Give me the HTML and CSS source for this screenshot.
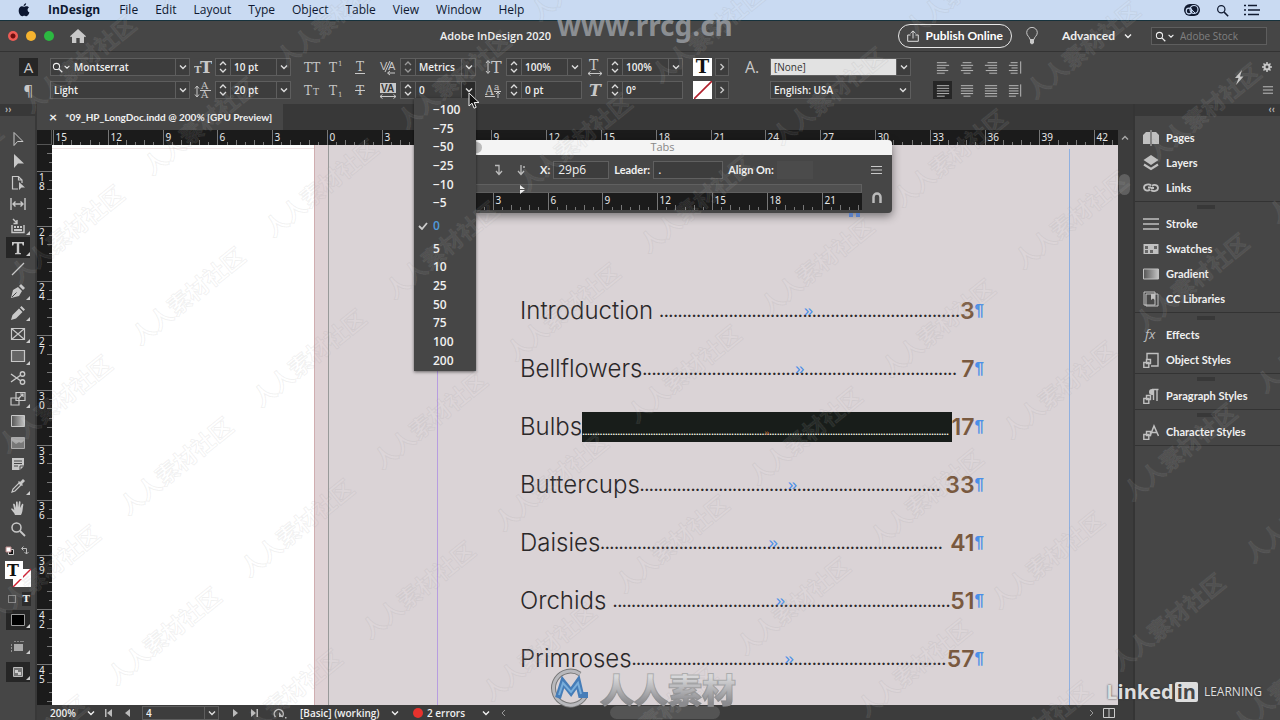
FILE: index.html
```html
<!DOCTYPE html>
<html lang="en">
<head>
<meta charset="utf-8">
<title>Adobe InDesign 2020</title>
<link rel="stylesheet" href="styles.css">
</head>
<body>
<svg class="sprite" aria-hidden="true">
  <defs>
    <linearGradient id="fade"><stop offset="0" stop-color="#555"/><stop offset="1" stop-color="#c4c4c4"/></linearGradient>
    <linearGradient id="silver" x1="0" y1="0" x2="0" y2="1"><stop offset="0" stop-color="#d4d4d6"/><stop offset="1" stop-color="#88888c"/></linearGradient>
  </defs>
  <symbol id="down" viewBox="0 0 10 10"><path d="M2 3.5l3 3 3-3" fill="none" stroke="currentColor" stroke-width="1.4"/></symbol>
  <symbol id="right" viewBox="0 0 10 10"><path d="M3.5 2l3 3-3 3" fill="none" stroke="currentColor" stroke-width="1.4"/></symbol>
  <symbol id="spin" viewBox="0 0 14 18"><path d="M4 7l3-3 3 3M4 11l3 3 3-3" fill="none" stroke="currentColor" stroke-width="1.3"/></symbol>
  <symbol id="search" viewBox="0 0 16 16"><circle cx="6.5" cy="6.5" r="4.5" fill="none" stroke="currentColor" stroke-width="1.5"/><path d="M10 10l5 5" stroke="currentColor" stroke-width="1.8"/></symbol>
  <symbol id="menu" viewBox="0 0 12 12"><path d="M1 2.5h11M1 6h11M1 9.500h11" stroke="currentColor"/></symbol>
  <symbol id="al" viewBox="0 0 16 16"><path d="M1 2.500h11M1 5.500h14M1 8.500h10M1 11.500h13M1 14.500h9" stroke="currentColor"/></symbol>
  <symbol id="ac" viewBox="0 0 16 16"><path d="M3 2.500h10M1 5.500h14M3 8.500h10M1 11.500h14M4 14.500h8" stroke="currentColor"/></symbol>
  <symbol id="ar" viewBox="0 0 16 16"><path d="M4 2.500h11M1 5.500h14M5 8.500h10M2 11.500h13M6 14.500h9" stroke="currentColor"/></symbol>
  <symbol id="as" viewBox="0 0 16 16"><path d="M3 2.500h8M1 5.500h10M4 8.500h7M1 11.500h10M3 14.500h8M14.500 1v14" stroke="currentColor"/></symbol>
  <symbol id="jl" viewBox="0 0 16 16"><path d="M1 2.500h14M1 5.500h14M1 8.500h14M1 11.500h14M1 14.500h9" stroke="currentColor"/></symbol>
  <symbol id="jc" viewBox="0 0 16 16"><path d="M1 2.500h14M1 5.500h14M1 8.500h14M1 11.500h14M4 14.500h8" stroke="currentColor"/></symbol>
  <symbol id="jf" viewBox="0 0 16 16"><path d="M1 2.500h14M1 5.500h14M1 8.500h14M1 11.500h14M1 14.500h14" stroke="currentColor"/></symbol>
  <symbol id="js" viewBox="0 0 16 16"><path d="M1 2.500h11M1 5.500h11M1 8.500h11M1 11.500h11M1 14.500h8M14.500 1v14" stroke="currentColor"/></symbol>
  <symbol id="stylebox" viewBox="0 0 16 16"><path d="M3.500 7.500h4v4h-4zM.8 10.500h5v5h-5z" fill="#484848" stroke="currentColor" stroke-width="1.400"/></symbol>
</svg>

<header class="menubar">
  <svg class="apple" viewBox="0 0 14 16" aria-label="Apple"><path d="M9.500 0c.1 1.800-1.300 3.300-2.900 3.300C6.400 1.600 7.900.2 9.500 0zM7 4.300c.8 0 1.700-.7 3-.7 1.100 0 2.200.6 2.800 1.600-2.400 1.400-2 4.700.5 5.700-.6 1.700-2 4.300-3.500 4.300-.9 0-1.400-.6-2.500-.6s-1.700.6-2.500.6C3.100 15.200.8 12 .8 8.800.8 5.600 2.700 3.700 4.600 3.700c1 0 1.700.6 2.400.6z" fill="#0b1630"/></svg>
  <nav><a href="#" class="app">InDesign</a><a href="#">File</a><a href="#">Edit</a><a href="#">Layout</a><a href="#">Type</a><a href="#">Object</a><a href="#">Table</a><a href="#">View</a><a href="#">Window</a><a href="#">Help</a></nav>
  <div class="tray">
    <svg width="18" height="14" viewBox="0 0 18 14"><rect x="1" y="1" width="16" height="12" rx="6" fill="#101a30"/><circle cx="6" cy="8" r="2.800" fill="none" stroke="#c8d9f2" stroke-width="1.200"/><circle cx="11" cy="6.500" r="4" fill="none" stroke="#c8d9f2" stroke-width="1.200"/><path d="M7 5l5 5" stroke="#c8d9f2"/></svg>
    <svg width="13" height="13"><use href="#search"/></svg>
    <svg width="16" height="12" viewBox="0 0 16 12"><path d="M0 1.500h2M4 1.500h9M0 6h2M4 6h12M0 10.500h2M4 10.500h11" stroke="#101a30" stroke-width="1.700"/></svg>
  </div>
</header>

<div class="titlebar">
  <div class="lights"><i class="red"></i><i class="amber"></i><i class="green"></i></div>
  <button class="bare" aria-label="Home"><svg width="16" height="14" viewBox="0 0 16 14"><path d="M8 0l8 7.300-1 1L14 7.500V14h-4.300V9H6.300v5H2V7.500l-1 .8-1-1z" fill="#c8c8c8"/></svg></button>
  <h1>Adobe InDesign 2020</h1>
  <div class="title-tools">
    <button class="publish"><svg width="12" height="12" viewBox="0 0 12 12"><path d="M3.500 5H.7v6.300h10.600V5H8.500M6 8.500V1M3.500 3.300L6 .9l2.500 2.400" fill="none" stroke="#ddd"/></svg>Publish Online</button>
    <button class="bare" aria-label="Learn"><svg width="12" height="18" viewBox="0 0 12 18"><path d="M4 12.500C4 10 .7 9 .7 5.700a5.300 5.300 0 0 1 10.600 0C11.300 9 8 10 8 12.500z" fill="none" stroke="#c8c8c8"/><path d="M4 12.500h4V16l-2 1.500L4 16z" fill="#c8c8c8"/></svg></button>
    <button class="bare workspace">Advanced<svg width="10" height="10"><use href="#down"/></svg></button>
    <label class="stock"><svg width="11" height="11"><use href="#search"/></svg><svg width="8" height="8"><use href="#down"/></svg><input type="text" placeholder="Adobe Stock" aria-label="Adobe Stock"></label>
  </div>
</div>

<section class="control" aria-label="Character formatting">
  <div class="pair modes"><button class="on" aria-label="Character">A</button><button aria-label="Paragraph">¶</button></div>
  <div class="pair font">
    <div class="field"><svg class="lead" width="11" height="11"><use href="#search"/></svg><svg width="8" height="8"><use href="#down"/></svg><input value="Montserrat" aria-label="Font"><button aria-label="Fonts"><svg width="10" height="10"><use href="#down"/></svg></button></div>
    <div class="field"><select aria-label="Font style"><option>Light</option></select><span class="arrow"><svg width="10" height="10"><use href="#down"/></svg></span></div>
  </div>
  <div class="pair glyphs">
    <svg viewBox="0 0 18 18" class="serif"><text x="0" y="15" font-size="10">T</text><text x="6" y="15" font-size="17">T</text></svg>
    <svg viewBox="0 0 18 18" class="serif thin"><text x="7" y="8" font-size="10">A</text><text x="7" y="17" font-size="10">A</text><path d="M6 9.500h11M3 6v9M1 7.500L3 5l2 2.500M1 13.500L3 16l2-2.500"/></svg>
  </div>
  <div class="pair size">
    <div class="field"><button class="spin" aria-label="Step font size"><svg width="14" height="18"><use href="#spin"/></svg></button><input value="10 pt" aria-label="Font size"><button aria-label="Font sizes"><svg width="10" height="10"><use href="#down"/></svg></button></div>
    <div class="field"><button class="spin" aria-label="Step leading"><svg width="14" height="18"><use href="#spin"/></svg></button><input value="20 pt" aria-label="Leading"><button aria-label="Leadings"><svg width="10" height="10"><use href="#down"/></svg></button></div>
  </div>
  <div class="cases">
    <button aria-label="All caps"><svg viewBox="0 0 18 18" class="serif thin"><text x="1" y="14" font-size="12">TT</text></svg></button>
    <button aria-label="Superscript"><svg viewBox="0 0 18 18" class="serif thin"><text x="2" y="14" font-size="12">T</text><text x="11" y="8" font-size="7">1</text></svg></button>
    <button aria-label="Underline"><svg viewBox="0 0 18 18" class="serif thin"><text x="5" y="13" font-size="12">T</text><path d="M4 15.500h10"/></svg></button>
    <button aria-label="Small caps"><svg viewBox="0 0 18 18" class="serif thin"><text x="1" y="14" font-size="12">T</text><text x="10" y="14" font-size="9">T</text></svg></button>
    <button aria-label="Subscript"><svg viewBox="0 0 18 18" class="serif thin"><text x="2" y="14" font-size="12">T</text><text x="11" y="16" font-size="7">1</text></svg></button>
    <button aria-label="Strikethrough"><svg viewBox="0 0 18 18" class="serif thin"><text x="5" y="14" font-size="12">T</text><path d="M4 9.500h10"/></svg></button>
  </div>
  <div class="pair glyphs">
    <svg viewBox="0 0 18 18" class="sans"><text x="1" y="12" font-size="11">V</text><text x="9" y="12" font-size="11">A</text><path d="M11 3L6 14M16 15H9M11 13l-2.500 2 2.500 2"/></svg>
    <svg viewBox="0 0 18 18" class="sans"><rect x="1" y="2" width="16" height="10" fill="#c8c8c8"/><text x="2" y="11" font-size="10" class="dark">VA</text><path d="M1 15.500h16M3.500 13.500l-2.500 2 2.500 2M14.500 13.500l2.500 2-2.500 2"/></svg>
  </div>
  <div class="pair kern">
    <div class="field"><button class="spin dim" aria-label="Step kerning"><svg width="14" height="18"><use href="#spin"/></svg></button><select aria-label="Kerning"><option>Metrics</option></select><span class="arrow"><svg width="10" height="10"><use href="#down"/></svg></span></div>
    <div class="field">
      <button class="spin" aria-label="Step tracking"><svg width="14" height="18"><use href="#spin"/></svg></button><input value="0" aria-label="Tracking"><button class="open" aria-label="Tracking values" aria-expanded="true"><svg width="10" height="10"><use href="#down"/></svg></button>
      <div class="dropdown" role="menu">
        <button role="menuitem">−100</button><button role="menuitem">−75</button><button role="menuitem">−50</button><button role="menuitem">−25</button><button role="menuitem">−10</button><button role="menuitem">−5</button>
        <button role="menuitem" class="current"><svg width="10" height="8" viewBox="0 0 10 8"><path d="M1 4l3 3 5-6" fill="none" stroke="#ccc" stroke-width="1.800"/></svg>0</button>
        <button role="menuitem">5</button><button role="menuitem">10</button><button role="menuitem">25</button><button role="menuitem">50</button><button role="menuitem">75</button><button role="menuitem">100</button><button role="menuitem">200</button>
      </div>
      <svg class="cursor" width="12" height="18" viewBox="0 0 12 18"><path d="M1 1v13l3-2.800 2 5 2.200-.9-2-4.800H11z" fill="#111" stroke="#eee"/></svg>
    </div>
  </div>
  <div class="pair glyphs wide">
    <svg viewBox="0 0 18 18" class="serif thin"><text x="6" y="15" font-size="16">T</text><path d="M3 3v12M1 5l2-2.500L5 5M1 13l2 2.500L5 13"/></svg>
    <svg viewBox="0 0 18 18" class="serif thin"><text x="0" y="14" font-size="12">A</text><text x="9" y="9" font-size="9">a</text><path d="M0 15.500h10M9 10.500h7M13 17v-6M11 13l2-2 2 2"/></svg>
  </div>
  <div class="pair scale">
    <div class="field"><button class="spin" aria-label="Step vertical scale"><svg width="14" height="18"><use href="#spin"/></svg></button><input value="100%" aria-label="Vertical scale"><button aria-label="Vertical scales"><svg width="10" height="10"><use href="#down"/></svg></button></div>
    <div class="field"><button class="spin" aria-label="Step baseline shift"><svg width="14" height="18"><use href="#spin"/></svg></button><input value="0 pt" aria-label="Baseline shift"></div>
  </div>
  <div class="pair glyphs">
    <svg viewBox="0 0 18 18" class="serif thin"><text x="3" y="12" font-size="14">T</text><path d="M2 15.500h14M4.500 13.500l-2.500 2 2.500 2M13.500 13.500l2.500 2-2.500 2"/></svg>
    <svg viewBox="0 0 18 18" class="serif italic"><text x="3" y="15" font-size="16">T</text></svg>
  </div>
  <div class="pair scale">
    <div class="field"><button class="spin" aria-label="Step horizontal scale"><svg width="14" height="18"><use href="#spin"/></svg></button><input value="100%" aria-label="Horizontal scale"><button aria-label="Horizontal scales"><svg width="10" height="10"><use href="#down"/></svg></button></div>
    <div class="field"><button class="spin" aria-label="Step skew"><svg width="14" height="18"><use href="#spin"/></svg></button><input value="0°" aria-label="Skew"></div>
  </div>
  <div class="swatches">
    <button class="white" aria-label="Fill">T</button><button class="more" aria-label="Fill options"><svg width="10" height="10"><use href="#right"/></svg></button>
    <button class="white" aria-label="Stroke"><svg width="18" height="18"><path d="M0 18L18 0" stroke="#b0202c" stroke-width="1.600"/></svg></button><button class="more" aria-label="Stroke options"><svg width="10" height="10"><use href="#right"/></svg></button>
  </div>
  <div class="pair charstyle"><span>A.</span></div>
  <div class="pair language">
    <div class="field light"><select aria-label="Character style"><option>[None]</option></select><span class="arrow"><svg width="10" height="10"><use href="#down"/></svg></span></div>
    <div class="field"><select aria-label="Language"><option>English: USA</option></select><span class="arrow plain"><svg width="10" height="10"><use href="#down"/></svg></span></div>
  </div>
  <div class="aligns">
    <button aria-label="Align left"><svg><use href="#al"/></svg></button><button aria-label="Align center"><svg><use href="#ac"/></svg></button><button aria-label="Align right"><svg><use href="#ar"/></svg></button><button aria-label="Align towards spine"><svg><use href="#as"/></svg></button>
    <button class="on" aria-label="Justify left"><svg><use href="#jl"/></svg></button><button aria-label="Justify center"><svg><use href="#jc"/></svg></button><button aria-label="Justify all"><svg><use href="#jf"/></svg></button><button aria-label="Align away from spine"><svg><use href="#js"/></svg></button>
  </div>
  <button class="bare bolt" aria-label="Quick apply"><svg width="10" height="15" viewBox="0 0 10 15"><path d="M8 0L1 8h3.500L2 15l7.500-8.500H6z" fill="#c8c8c8"/></svg></button>
  <div class="pair corner">
    <button class="bare" aria-label="Settings"><svg width="10" height="10" viewBox="0 0 12 12"><circle cx="6" cy="6" r="3" fill="none" stroke="currentColor" stroke-width="2.500"/><path d="M6 0v2.500M6 9.500V12M0 6h2.500M9.500 6H12M1.800 1.800l1.700 1.700M8.500 8.500l1.700 1.700M10.200 1.800L8.500 3.500M3.500 8.500l-1.700 1.700" stroke="currentColor" stroke-width="1.800"/></svg></button>
    <button class="bare" aria-label="Panel menu"><svg width="11" height="12"><use href="#menu"/></svg></button>
  </div>
</section>

<main class="work">
  <aside class="tools" aria-label="Tools">
    <div class="strip">››</div>
    <div class="toolset">
      <button aria-label="Selection"><svg viewBox="0 0 16 16"><path d="M4 1.500v13l3.500-4H13z" fill="none" stroke="currentColor"/></svg></button>
      <button aria-label="Direct selection"><svg viewBox="0 0 16 16"><path d="M4 1v14l4-4.500h6z" fill="currentColor"/></svg></button>
      <button aria-label="Page"><svg viewBox="0 0 16 16"><path d="M8 14H2.500V1.500h6L12 5v3M8.500 1.500V5H12" fill="none" stroke="currentColor" stroke-width="1.200"/><path d="M9 7v8l2.500-2.500H15z" fill="currentColor"/></svg></button>
      <button aria-label="Gap"><svg viewBox="0 0 16 16"><path d="M1 2v12M15 2v12M3 8h10M5.500 5.500L3 8l2.500 2.500M10.500 5.500L13 8l-2.500 2.500" fill="none" stroke="currentColor" stroke-width="1.400"/></svg></button>
      <button class="more" aria-label="Content collector"><svg viewBox="0 0 16 16"><path d="M2 7v7.500h12V7" fill="none" stroke="currentColor" stroke-width="1.400"/><path d="M4 8h2v2H4zM7 8h2v2H7zM10 8h2v2h-2zM4 11h8v2H4z" fill="currentColor"/><path d="M3 1l4 4M7 2v3.500H3.500" fill="none" stroke="currentColor" stroke-width="1.400"/></svg></button>
      <button class="more on" aria-label="Type"><svg viewBox="0 0 16 16"><path d="M2 2h12v3.500h-1.200L12 3.500H9.200v9.300l1.800.4v1H5v-1l1.800-.4V3.500H4l-.8 2H2z" fill="currentColor"/></svg></button>
      <button aria-label="Line"><svg viewBox="0 0 16 16"><path d="M2 14L14 2" stroke="currentColor" stroke-width="1.300"/></svg></button>
      <button class="more" aria-label="Pen"><svg viewBox="0 0 16 16"><path d="M1 15l2-8 5-3 4 4-3 5zM9 3l2-2 4 4-2 2z" fill="currentColor"/><path d="M2 14l4.500-4.500" stroke="#464646"/></svg></button>
      <button class="more" aria-label="Pencil"><svg viewBox="0 0 16 16"><path d="M1 15l1.500-5L9 3.500l3.500 3.500L6 13.500zM10 2.500L11.500 1 15 4.500 13.500 6z" fill="currentColor"/></svg></button>
      <button class="more" aria-label="Rectangle frame"><svg viewBox="0 0 16 16"><path d="M1.500 2.500h13v11h-13zM1.500 2.500l13 11M14.500 2.500l-13 11" fill="none" stroke="currentColor" stroke-width="1.200"/></svg></button>
      <button class="more" aria-label="Rectangle"><svg viewBox="0 0 16 16"><path d="M1.500 2.500h13v11h-13z" fill="#666" stroke="currentColor" stroke-width="1.200"/></svg></button>
      <button aria-label="Scissors"><svg viewBox="0 0 16 16" fill="none" stroke="currentColor" stroke-width="1.400"><circle cx="12.500" cy="4" r="2.200"/><circle cx="12.500" cy="12" r="2.200"/><path d="M1 4l9.500 6.800M1 12l9.500-6.800"/></svg></button>
      <button class="more" aria-label="Free transform"><svg viewBox="0 0 16 16" fill="none" stroke="currentColor" stroke-width="1.200"><path d="M6 1.500h9v8H6zM1 7h8v7H1zM8 8l5-5M10 3h3v3"/></svg></button>
      <button aria-label="Gradient swatch"><svg viewBox="0 0 16 16"><path d="M1.500 2.500h13v11h-13z" fill="url(#fade)" stroke="currentColor"/></svg></button>
      <button aria-label="Gradient feather"><svg viewBox="0 0 16 16"><path d="M1.500 2.500h13v11h-13z" fill="#777" stroke="#aaa"/><path d="M2 3h12v3l-3 2-2-1-3 2-4-3z" fill="#a8a8a8"/></svg></button>
      <button aria-label="Note"><svg viewBox="0 0 16 16"><path d="M2 2h12v8l-4 4H2z" fill="currentColor"/><path d="M4 5h8M4 7.500h8M4 10h4M10 14v-4h4" fill="none" stroke="#464646"/></svg></button>
      <button class="more" aria-label="Eyedropper"><svg viewBox="0 0 16 16"><path d="M2 14l1-3 6-6 2 2-6 6z" fill="none" stroke="currentColor" stroke-width="1.200"/><path d="M8 4l4 4 1-1-1-1 3-3-2-2-3 3-1-1z" fill="currentColor"/></svg></button>
      <button aria-label="Hand"><svg viewBox="0 0 16 16"><path d="M5 15c-1-3-3-4-4-6 1-1 2 0 3.300 1.300L3 4c1-.8 1.700 0 2 .7L6 8V2c1-1 1.700-.3 1.700.5L8 7.500l1-6c1-.7 1.700 0 1.500 1L10 8l2-4c1-.5 1.500.3 1.300 1C12.500 8 13 12 11 15z" fill="currentColor"/></svg></button>
      <button aria-label="Zoom"><svg viewBox="0 0 16 16"><use href="#search"/></svg></button>
    </div>
    <div class="swap"><svg width="10" height="10" viewBox="0 0 10 10"><path d="M3.500 3.500h5v5h-5z" fill="#111" stroke="#ccc"/><path d="M1 1h5v5H1z" fill="#fff" stroke="#b88"/></svg><svg width="9" height="9" viewBox="0 0 9 9"><path d="M1 2.500h4.500V8M2.500.5l-2 2 2 2M3.500 6l2 2 2-2" fill="none" stroke="#bbb"/></svg></div>
    <div class="fillstroke"><svg width="26" height="26" viewBox="0 0 26 26"><path d="M8 8h18v18H8z" fill="#fff"/><path d="M8 26L26 8" stroke="#d02030" stroke-width="1.500"/><path d="M0 0h18v18H0z" fill="#fff"/><text x="2" y="15" font-size="16" fill="#111">T</text></svg></div>
    <div class="formats"><i></i><b>T</b></div>
    <div class="screens">
      <button class="on more" aria-label="Apply color"><svg viewBox="0 0 16 16"><path d="M1.500 2.500h13v11h-13z" fill="#000" stroke="#999"/></svg></button>
      <button class="more" aria-label="View options"><svg viewBox="0 0 16 16"><path d="M4 6h9v7H4z" fill="#aaa"/><path d="M1 7h1M1 10h1M1 13h1M5 3v1M8 3v1M11 3v1M13 3v1" stroke="#aaa" stroke-width="1.300"/></svg></button>
      <button class="on more" aria-label="Screen mode"><svg viewBox="0 0 16 16"><path d="M3.500 3.500h9v9h-9z" fill="#777" stroke="#bbb"/><path d="M5 6h3v2h3v3H8V9H5z" fill="#ccc"/></svg></button>
    </div>
  </aside>

  <section class="document">
    <div class="tabs"><div class="tab"><button class="bare" aria-label="Close document">×</button>*09_HP_LongDoc.indd @ 200% [GPU Preview]</div></div>
    <div class="stage">
      <div class="ruler-origin"></div>
      <svg class="ruler-x"></svg>
      <div class="scroll-up"><svg width="10" height="10"><use href="#down"/></svg></div>
      <svg class="ruler-y"></svg>
      <div class="canvas">
        <div class="left-page"></div>
        <div class="page"><div class="sheet"><div class="margins">
          <ol class="toc">
            <li class="end"><span>Introduction</span><span class="leader"><i>»</i></span><b>3</b><em>¶</em></li>
            <li class="short"><span>Bellflowers</span><span class="leader"><i>»</i></span><b>7</b><em>¶</em></li>
            <li class="picked"><span>Bulbs</span><span class="leader"><i>»</i></span><b>17</b><em>¶</em></li>
            <li><span>Buttercups</span><span class="leader"><i>»</i></span><b>33</b><em>¶</em></li>
            <li class="short"><span>Daisies</span><span class="leader"><i>»</i></span><b>41</b><em>¶</em></li>
            <li class="end"><span>Orchids</span><span class="leader"><i>»</i></span><b>51</b><em>¶</em></li>
            <li><span>Primroses</span><span class="leader"><i>»</i></span><b>57</b><em>¶</em></li>
          </ol>
        </div></div></div>
      </div>
      <div class="scroll-y"><i></i></div>
      <section class="tabs-panel" aria-label="Tabs">
        <header><i></i>Tabs</header>
        <div class="tabs-row">
          <button class="bare" aria-label="Right tab"><svg width="10" height="12" viewBox="0 0 10 12"><path d="M2 1.500h4V10M3 7l3 3.500L9 7" fill="none" stroke="#bbb" stroke-width="1.300"/></svg></button>
          <button class="bare" aria-label="Decimal tab"><svg width="10" height="12" viewBox="0 0 10 12"><path d="M5 1v9M2 7l3 3.500L8 7M7 3h2" fill="none" stroke="#bbb" stroke-width="1.300"/></svg></button>
          <label class="x">X:<input value="29p6"></label>
          <label class="dot">Leader:<input value="."></label>
          <label class="align">Align On:<input value=""></label>
          <button class="bare end" aria-label="Tabs menu"><svg width="12" height="12"><use href="#menu"/></svg></button>
        </div>
        <div class="tabs-ruler"><div><div class="stops"><svg width="7" height="9" viewBox="0 0 7 9"><path d="M1 0l5 4H1zM1 5h5L1 9z" fill="#eee"/></svg></div><svg class="ruler-tab"></svg></div>
          <button class="bare" aria-label="Position panel above text frame"><svg width="12" height="13" viewBox="0 0 12 13"><path d="M2.500 12V6a3.500 3.500 0 0 1 7 0v6" fill="none" stroke="#bbb" stroke-width="2.500"/></svg></button></div>
      </section>
      <svg class="quote" width="12" height="5"><path d="M0 0h4v4H0zM7 0h4v4H7z" fill="#5a7fc4"/></svg>
    </div>
    <footer class="status">
      <label class="zoom"><select aria-label="Zoom"><option>200%</option></select><svg width="10" height="10"><use href="#down"/></svg></label>
      <button class="bare" aria-label="First page"><svg width="8" height="8" viewBox="0 0 8 8"><path d="M0 0h1.500v8H0zM7 0v8L2 4z" fill="#bbb"/></svg></button>
      <button class="bare" aria-label="Previous page"><svg width="8" height="8" viewBox="0 0 8 8"><path d="M6 0v8L1 4z" fill="#bbb"/></svg></button>
      <div class="field pageno"><input value="4" aria-label="Page"><button aria-label="Pages"><svg width="10" height="10"><use href="#down"/></svg></button></div>
      <button class="bare" aria-label="Next page"><svg width="8" height="8" viewBox="0 0 8 8"><path d="M2 0v8l5-4z" fill="#bbb"/></svg></button>
      <button class="bare" aria-label="Last page"><svg width="8" height="8" viewBox="0 0 8 8"><path d="M6.500 0H8v8H6.500zM1 0v8l5-4z" fill="#bbb"/></svg></button>
      <svg class="open-icon" width="15" height="12" viewBox="0 0 15 12"><path d="M3.500 10A4.500 4.500 0 1 1 10 10" fill="none" stroke="#bbb" stroke-width="1.500"/><path d="M7 5v5h4z" fill="#bbb"/><path d="M13 10h1.500v1.500H13z" fill="#bbb"/></svg>
      <label class="profile"><select aria-label="Preflight profile"><option>[Basic] (working)</option></select><svg width="10" height="10"><use href="#down"/></svg></label>
      <label class="errors"><i></i><select aria-label="Preflight errors"><option>2 errors</option></select><svg width="10" height="10"><use href="#down"/></svg></label>
      <div class="scroll-x"><svg width="8" height="8" viewBox="0 0 8 8"><path d="M5 1L2 4l3 3" fill="none" stroke="#999"/></svg><i></i><svg width="8" height="8" viewBox="0 0 8 8"><path d="M3 1l3 3-3 3" fill="none" stroke="#999"/></svg></div>
      <svg class="split" width="12" height="10" viewBox="0 0 12 10"><path d="M.5.5h11v9H.5zM6 0v10" fill="none" stroke="#ccc"/></svg>
    </footer>
  </section>

  <aside class="panels" aria-label="Panels">
    <div class="strip">‹‹</div>
    <div class="group">
      <button><svg viewBox="0 0 16 16"><path d="M7 2v12H0V5l3-3zM9 2v12h7V5l-3-3z" fill="currentColor"/><path d="M8 0v16" stroke="currentColor"/></svg>Pages</button>
      <button><svg viewBox="0 0 16 16"><path d="M8 0l7.500 5L8 10 .5 5z" fill="currentColor"/><path d="M1 9.500l7 4.500 7-4.500" fill="none" stroke="currentColor" stroke-width="2.200"/></svg>Layers</button>
      <button><svg viewBox="0 0 16 16" fill="none" stroke="currentColor" stroke-width="1.800"><path d="M8 5.500C6 3.500 1 4.500 1 7.500s4 4 6 2M5 7.500h3M8 10c2 2 7 1 7-2s-4-4-6-2M8 8h3"/></svg>Links</button>
    </div>
    <div class="group">
      <button><svg viewBox="0 0 16 16"><path d="M0 3h16M0 8h16M0 13h16" stroke="currentColor" stroke-width="1.600"/></svg>Stroke</button>
      <button><svg viewBox="0 0 16 16"><path d="M.5 3h15v10H.5z" fill="currentColor"/><path d="M2 5h3v3H2zM11 5h3v3h-3zM7 9h3v3H7zM2 9h3v3H2z" fill="#666"/></svg>Swatches</button>
      <button><svg viewBox="0 0 16 16"><path d="M.5 3h15v10H.5z" fill="url(#fade)" stroke="currentColor"/></svg>Gradient</button>
      <button><svg viewBox="0 0 16 16"><path d="M1 1h11v13H1zM3 3h12v12H3z" fill="#484848" stroke="currentColor"/><path d="M8 3h4v6l-2-1.500L8 9z" fill="currentColor"/></svg>CC Libraries</button>
    </div>
    <div class="group">
      <button><svg viewBox="0 0 16 16"><text x="2" y="12" class="fx">fx</text></svg>Effects</button>
      <button><svg viewBox="0 0 16 16"><path d="M4 9V1.500h11V14H8" fill="none" stroke="currentColor" stroke-width="1.400"/><use href="#stylebox"/></svg>Object Styles</button>
    </div>
    <div class="group"><button><svg viewBox="0 0 16 16"><path d="M10.500 1v11M14 1v12M15.500 1.500H9" fill="none" stroke="currentColor" stroke-width="1.400"/><path d="M11 1H9a3 3 0 0 0 0 6h2z" fill="currentColor"/><use href="#stylebox"/></svg>Paragraph Styles</button></div>
    <div class="group"><button><svg viewBox="0 0 16 16"><path d="M7 12l4-10 4.500 10M8.500 8.500h5.500" fill="none" stroke="currentColor" stroke-width="1.500"/><use href="#stylebox"/></svg>Character Styles</button></div>
  </aside>
</main>

<svg class="marks" aria-hidden="true"></svg>
<div class="site">www.rrcg.cn</div>
<div class="brand"><svg width="44" height="44" viewBox="0 0 44 44"><path d="M32 7A17 17 0 1 0 37 30" fill="none" stroke="#777" stroke-width="5"/><path d="M32 7A17 17 0 1 0 37 30" fill="none" stroke="#b9b9bd" stroke-width="3"/><path d="M10 31l5-16 8 10 7-10 3 13h7" fill="none" stroke="#467db8" stroke-width="6"/><path d="M11 28l4-12 8 9 7-9 3 11" fill="none" stroke="#79aedb" stroke-width="2"/></svg><span>人人素材</span></div>
<div class="linkedin"><b>Linked</b><b class="box">in</b><span>LEARNING</span></div>
<script src="main.js"></script>
</body>
</html>
```

FILE: styles.css
```css
* { box-sizing: border-box; }
html, body { height: 100%; }
body {
  margin: 0; display: flex; flex-direction: column; position: relative; overflow: hidden;
  background: #464646; color: #f0f0f0;
  font: 700 11px/14px Lato, "Open Sans", sans-serif;
}
button, input, select { font: inherit; color: inherit; margin: 0; padding: 0; border: 0; background: none; border-radius: 0; }
button { display: flex; align-items: center; justify-content: center; color: #c8c8c8; }
input { min-width: 0; outline: 0; }
select { appearance: none; min-width: 0; outline: 0; }
svg { flex: none; display: block; }
.sprite { position: absolute; width: 0; height: 0; }

.menubar { height: 21px; flex: none; display: flex; align-items: center; padding: 0 20px 0 18px; background: #c9daf2; border-bottom: 1px solid #16323c; color: #101a30; }
.apple { width: 12px; height: 14px; margin-right: 18px; }
.menubar nav { display: flex; gap: 17px; font: 500 12px/20px "Open Sans", sans-serif; }
.menubar a { color: #0e1830; text-decoration: none; }
.menubar .app { font-weight: 700; margin-right: 2px; }
.tray { margin-left: auto; display: flex; align-items: center; gap: 15px; }

.titlebar { height: 31px; flex: none; display: flex; align-items: center; padding: 0 13px 0 8px; border-bottom: 1px solid #333; position: relative; }
.lights { display: flex; gap: 8px; margin-right: 16px; }
.lights i { width: 10px; height: 10px; border-radius: 50%; background: #2cb941; }
.lights .red { background: radial-gradient(circle, #6d0d0d 2px, #ee5b55 3px); }
.lights .amber { background: #f5b32f; }
.titlebar h1 { position: absolute; left: 440px; margin: 0; font: 600 11px/16px "Open Sans", sans-serif; }
.title-tools { margin-left: auto; display: flex; align-items: center; gap: 14px; }
.publish { height: 24px; gap: 6px; padding: 0 8px; border: 1px solid #e8e8e8; border-radius: 12px; color: #fff; font-size: 12px; }
.workspace { margin-left: 10px; gap: 8px; color: #f0f0f0; font-size: 12px; }
.stock { display: flex; align-items: center; width: 116px; height: 18px; margin-left: 4px; padding: 0 3px; gap: 1px; border: 1px solid #5e5e5e; background: #3d3d3d; }
.stock input { width: 80px; padding-left: 4px; font: 400 10px/14px "Open Sans", sans-serif; }
.stock input::placeholder { color: #808080; }

.control { height: 52px; flex: none; display: flex; align-items: flex-start; padding: 6px 7px 0 19px; background: #464646; position: relative; z-index: 5; font: 600 10px/14px "Open Sans", sans-serif; }
.pair { display: flex; flex-direction: column; gap: 5px; }
.modes { width: 31px; }
.modes button { width: 19px; height: 18px; font: 500 15px/18px "Open Sans", sans-serif; }
.on { background: #262626; }
.field { display: flex; align-items: center; height: 18px; border: 1px solid #5e5e5e; background: #3d3d3d; position: relative; }
.field input, .field select { flex: 1; width: 0; padding-left: 3px; height: 16px; line-height: 16px; }
.field > button, .arrow { width: 14px; height: 16px; border-left: 1px solid #5e5e5e; display: flex; align-items: center; justify-content: center; color: #ddd; }
.field .spin { width: 15px; border: 0; border-right: 1px solid #5e5e5e; }
.field .dim { color: #999; }
.field .open { background: #2a2a2a; }
.arrow { pointer-events: none; }
.arrow.plain { border: 0; }
.font { width: 140px; }
.lead { margin-left: 1px; }
.glyphs { width: 18px; margin: 0 3px 0 4px; }
.glyphs.wide { margin-left: 9px; }
.glyphs svg, .cases svg { width: 18px; height: 18px; }
.serif, .sans { fill: #c8c8c8; stroke: none; font-family: "DejaVu Serif", serif; font-weight: 700; }
.sans { font-family: "Liberation Sans", sans-serif; font-weight: 400; }
.thin { font-weight: 400; }
.italic { font-style: italic; }
.glyphs path, .cases path { fill: none; stroke: #c8c8c8; }
.dark { fill: #333; font-weight: 700; }
.size { width: 76px; }
.cases { display: grid; grid-template-columns: repeat(3, 18px); gap: 5px 6px; margin: 0 6px 0 12px; }
.kern { width: 76px; }
.scale { width: 76px; }
.dropdown { position: absolute; left: 13px; top: 16px; width: 62px; padding: 2px 0 1px; background: #464646; box-shadow: 0 1px 3px #0008; z-index: 6; font-size: 12px; }
.field .dropdown button { width: 62px; height: 19px; padding-left: 19px; justify-content: flex-start; border: 0; color: #f0f0f0; }
.field .dropdown button:nth-child(3n) { height: 18px; }
.field .dropdown .current { height: 27px; padding-left: 4px; gap: 5px; color: #4f9bdc; }
.cursor { position: absolute; left: 67px; top: 10px; z-index: 7; }
.swatches { display: grid; grid-template-columns: 19px 14px; gap: 5px 3px; margin-left: 10px; }
.swatches button { height: 18px; }
.swatches .white { background: #fff; color: #111; font: 700 18px/18px "DejaVu Serif", serif; }
.swatches .more { border: 1px solid #5e5e5e; background: #3d3d3d; }
.charstyle { width: 41px; padding-left: 16px; font: 500 16px/18px "Open Sans", sans-serif; color: #c8c8c8; }
.language { width: 141px; }
.light { background: #e2e2e2; }
.light select { color: #333; font-weight: 400; }
.light .arrow { background: #3d3d3d; }
.aligns { display: grid; grid-template-columns: repeat(4, 19px); gap: 5px; margin-left: 22px; }
.aligns button { height: 18px; }
.aligns svg { width: 14px; height: 15px; }
.bare { background: none; }
.bolt { margin: 12px 17px 0 auto; }
.corner button { width: 12px; height: 18px; }

.work { flex: 1; min-height: 0; display: flex; }
.strip { height: 12px; background: #383838; color: #bbb; font-size: 11px; line-height: 10px; padding: 0 5px; }
.tools { width: 37px; flex: none; border-right: 2px solid #383838; display: flex; flex-direction: column; }
.toolset { padding-top: 12px; }
.toolset button, .screens button { position: relative; width: 24px; height: 22px; margin-left: 6px; }
.toolset button:nth-child(3n) { height: 21px; }
.toolset svg, .screens svg { width: 16px; height: 16px; }
.tools .more::after { content: ""; position: absolute; right: 0; bottom: 2px; border: 2px solid; border-color: transparent #ccc #ccc transparent; }
.swap { display: flex; justify-content: space-between; padding: 6px 5px 5px; }
.fillstroke { padding: 0 5px; font-family: "DejaVu Serif", serif; font-weight: 700; }
.formats { display: flex; align-items: center; justify-content: space-between; padding: 5px 4px 4px 8px; }
.formats i { flex: none; width: 8px; height: 8px; border: 1px solid #888; }
.formats b { font: 700 10px/14px "DejaVu Serif", serif; background: #2c2c2c; padding: 0 1px; }
.screens { display: flex; flex-direction: column; gap: 6px; }
.screens button { height: 20px; }

.document { flex: 1; min-width: 0; display: flex; flex-direction: column; }
.tabs { height: 26px; flex: none; display: flex; background: #383838; }
.tab { display: flex; align-items: center; gap: 8px; padding: 0 11px 0 12px; background: #464646; font-size: 10px; }
.tab .bare { font-size: 14px; line-height: 14px; color: #eee; }
.stage { flex: 1; min-height: 0; position: relative; display: grid; grid-template-columns: 15px 1fr 15px; grid-template-rows: 15px 1fr; background: #1b1b1b; }
.ruler-origin { border-right: 1px solid #555; border-bottom: 1px solid #555; }
.stage > svg.ruler-x, .stage > svg.ruler-y { width: 100%; height: 100%; }
.ruler-x, .ruler-y, .ruler-tab { overflow: hidden; font: 10px "Noto Sans", sans-serif; fill: #e8e8e8; stroke: none; }
.ruler-x path, .ruler-y path, .ruler-tab path { stroke: #777; fill: none; }
.scroll-up, .scroll-y { background: #3c3c3c; }
.scroll-up svg { transform: rotate(180deg); color: #aaa; margin: 3px 2px; }
.scroll-y i { display: block; width: 11px; height: 21px; margin: 29px 1px; border-radius: 6px; background: #606060; }
.canvas { display: flex; min-width: 0; overflow: hidden; background: #fff; }
.left-page { flex: 0 0 262px; border-top: 1px solid #f0e4e4; margin-top: 3px; }
.page { flex: 1; display: flex; padding-left: 13px; border-left: 1px solid #d0aeb0; background: #dfd2d5; min-width: 0; }
.sheet { flex: 1; display: flex; border-left: 1px solid #999; background: #dad3d6; min-width: 0; }
.margins { flex: 1; margin: 4px 48px 0 108px; border: 1px solid #b79de0; border-width: 0 1px; border-right-color: #8fb0e0; min-width: 0; }
.toc { list-style: none; margin: 0; padding: 133px 0 0 82px; width: 546px; color: #2b2829; font: 300 24px/58px "Inter", sans-serif; }
.toc li { display: flex; align-items: center; height: 58px; }
.toc b { font-weight: 600; font-size: 23px; color: #79593f; }
.toc em { font: 700 17px/58px "Liberation Sans", sans-serif; color: #4a8fe8; }
.leader { flex: 1; min-width: 0; position: relative; white-space: nowrap; overflow: hidden; font: 500 17px/30px "Noto Sans", sans-serif; }
.leader i { position: absolute; left: 0; right: 0; top: 0; text-align: center; font: 400 17px/30px "Liberation Sans", sans-serif; color: #4a8fe8; }
.end .leader { text-align: right; }
.end span:first-child { margin-right: 4px; }
.short .leader { margin-right: 4px; }
.picked .leader { background: #181d1a; color: #fffff0; font-size: 9px; font-weight: 700; line-height: 40px; height: 30px; }
.picked .leader i { color: #c06a30; font-size: 9px; top: 6px; }

.tabs-panel { position: absolute; left: 396px; top: 10px; width: 459px; height: 73px; display: flex; flex-direction: column; border-radius: 4px; background: #464646; box-shadow: 0 3px 10px #0007; font: 600 11px/14px "Open Sans", sans-serif; overflow: hidden; }
.tabs-panel header { height: 15px; background: #f4f4f4; color: #888; text-align: center; font-weight: 400; position: relative; }
.tabs-panel header i { position: absolute; left: 38px; top: 2px; width: 11px; height: 11px; border-radius: 50%; background: #bbb; }
.tabs-row { height: 29px; display: flex; align-items: center; padding: 0 10px 0 59px; gap: 5px; }
.tabs-row .bare { width: 12px; margin-right: 6px; }
.tabs-row .end { margin: 0 0 0 auto; }
.tabs-row label { display: flex; align-items: center; gap: 3px; font: 700 11px/14px Lato, sans-serif; }
.tabs-row .x { margin-left: 2px; }
.tabs-row input { width: 56px; height: 18px; padding-left: 4px; border: 1px solid #606060; background: #3d3d3d; font: 400 12px/16px "Open Sans", sans-serif; }
.tabs-row .dot input { width: 70px; }
.tabs-row .align input { width: 36px; border: 0; background: #4b4b4b; }
.tabs-ruler { display: flex; padding: 0 9px 0 5px; gap: 9px; }
.tabs-ruler > div { flex: 1; }
.stops { height: 9px; background: #505050; border: 1px solid #606060; padding-left: 80px; }
.tabs-ruler .ruler-tab { width: 100%; height: 17px; background: #1b1b1b; }
.quote { position: absolute; left: 812px; top: 83px; }

.status { height: 15px; flex: none; display: flex; align-items: center; background: #3c3c3c; padding: 0 4px 0 13px; font: 600 10px/14px "Open Sans", sans-serif; }
.status label { display: flex; align-items: center; justify-content: space-between; }
.zoom { width: 46px; margin-right: 9px; }
.zoom select { width: 30px; }
.status .bare { margin-right: 11px; }
.pageno { width: 77px; height: 14px; margin: 0 12px 0 -1px; }
.pageno input, .pageno > button { height: 12px; line-height: 12px; }
.open-icon { margin: 0 13px 0 3px; }
.profile { width: 100px; margin-right: 13px; }
.errors { width: 78px; }
.errors i { width: 10px; height: 10px; margin-right: 4px; border-radius: 50%; background: #e8322d; }
.errors select { flex: 1; }
.scroll-x { flex: 1; display: flex; align-items: center; margin: 0 8px 0 9px; }
.scroll-x i { width: 110px; height: 13px; margin: 0 auto 0 102px; border-radius: 7px; background: #545454; }
.split { margin-right: 14px; }

.panels { width: 147px; flex: none; border-left: 2px solid #353535; background: #464646; }
.panels .strip { text-align: right; }
.group { padding: 9px 0 1px; border-bottom: 1px solid #333; background: linear-gradient(#383838, #383838) 62px 3px / 18px 4px no-repeat; }
.strip + .group { padding-top: 9px; background: none; }
.group button { width: 100%; height: 25px; justify-content: flex-start; gap: 7px; padding-left: 8px; }
.group button { color: #f0f0f0; }
.group svg { width: 16px; height: 16px; color: #c0c0c0; }
.fx { font: italic 400 13px "Open Sans", sans-serif; fill: currentColor; }

.marks { position: absolute; inset: 0; width: 100%; height: 100%; pointer-events: none; z-index: 10; font: 700 23px "Noto Sans CJK SC", sans-serif; fill: #ffffff14; stroke: #90909020; stroke-width: 1px; }
.site { position: absolute; left: 557px; top: 8px; z-index: 11; font: 700 28px/34px "Noto Sans", sans-serif; color: #a2a6acc0; }
.brand { position: absolute; left: 548px; top: 667px; z-index: 11; display: flex; align-items: center; gap: 8px; font: 900 34px/40px "Noto Sans CJK SC", sans-serif; }
.brand span { color: transparent; background: linear-gradient(#d8d8da 20%, #8b8b8f 85%); background-clip: text; -webkit-text-stroke: 1px #8888; }
.linkedin { position: absolute; right: 18px; bottom: 17px; z-index: 11; display: flex; align-items: center; color: #dedede; font: 400 12px/22px "Open Sans", sans-serif; text-shadow: 0 0 2px #333; }
.linkedin b { font-size: 20px; }
.linkedin .box { margin: 0 6px 0 1px; padding: 0 2px; background: #dedede; color: #464646; border-radius: 2px; line-height: 20px; text-shadow: none; }
```

FILE: main.js
```js
const NS = "http://www.w3.org/2000/svg";
const STEP = 54.8;

function add(parent, tag, attrs, text) {
  const el = document.createElementNS(NS, tag);
  for (const key in attrs) el.setAttribute(key, attrs[key]);
  if (text !== undefined) el.textContent = text;
  parent.append(el);
}

/* Rulers: a long tick every three picas, short ones every half pica. */
function ruler(svg, origin, firstUnit, vertical, depth, labelAt) {
  const box = svg.getBoundingClientRect();
  const length = vertical ? box.height : box.width;
  let d = "";
  const start = Math.ceil(-origin / (STEP / 6));
  for (let i = start; origin + i * STEP / 6 < length; i++) {
    const p = Math.round(origin + i * STEP / 6) + 0.5;
    const size = i % 6 === 0 ? depth : i % 2 === 0 ? 5 : 3;
    d += vertical ? `M${depth} ${p}h-${size}` : `M${p} ${depth}v-${size}`;
    if (i % 6 !== 0) continue;
    const value = String(Math.abs(firstUnit + i / 2));
    if (!vertical) { if (p + 14 < length) add(svg, "text", { x: p + 2, y: labelAt }, value); }
    else [...value].forEach((c, n) => add(svg, "text", { x: 2, y: p + 9 + n * 9 }, c));
  }
  add(svg, "path", { d });
}
ruler(document.querySelector(".ruler-x"), 275, 0, false, 15, 11);
ruler(document.querySelector(".ruler-y"), 26, 18, true, 15, 0);
ruler(document.querySelector(".ruler-tab"), 0, 0, false, 17, 11);

/* Fill each tab with as many leader dots as fit. */
document.querySelectorAll(".leader").forEach(leader => {
  const probe = document.createElement("span");
  probe.textContent = ".".repeat(10);
  leader.append(probe);
  const dot = probe.getBoundingClientRect().width / 10;
  probe.textContent = ".".repeat(Math.floor(leader.clientWidth / dot));
});

/* Diagonal community mark, repeated across the window. */
const marks = document.querySelector(".marks");
for (let a = -12; a < 14; a++) {
  for (let b = -12; b < 14; b++) {
    const x = 515 + a * 121 + b * 133;
    const y = 362 + a * 62 - b * 108;
    if (x > -110 && x < innerWidth && y > -10 && y < innerHeight + 90) {
      add(marks, "text", { transform: `translate(${x} ${y}) rotate(-39)` }, "人人素材社区");
    }
  }
}
```
